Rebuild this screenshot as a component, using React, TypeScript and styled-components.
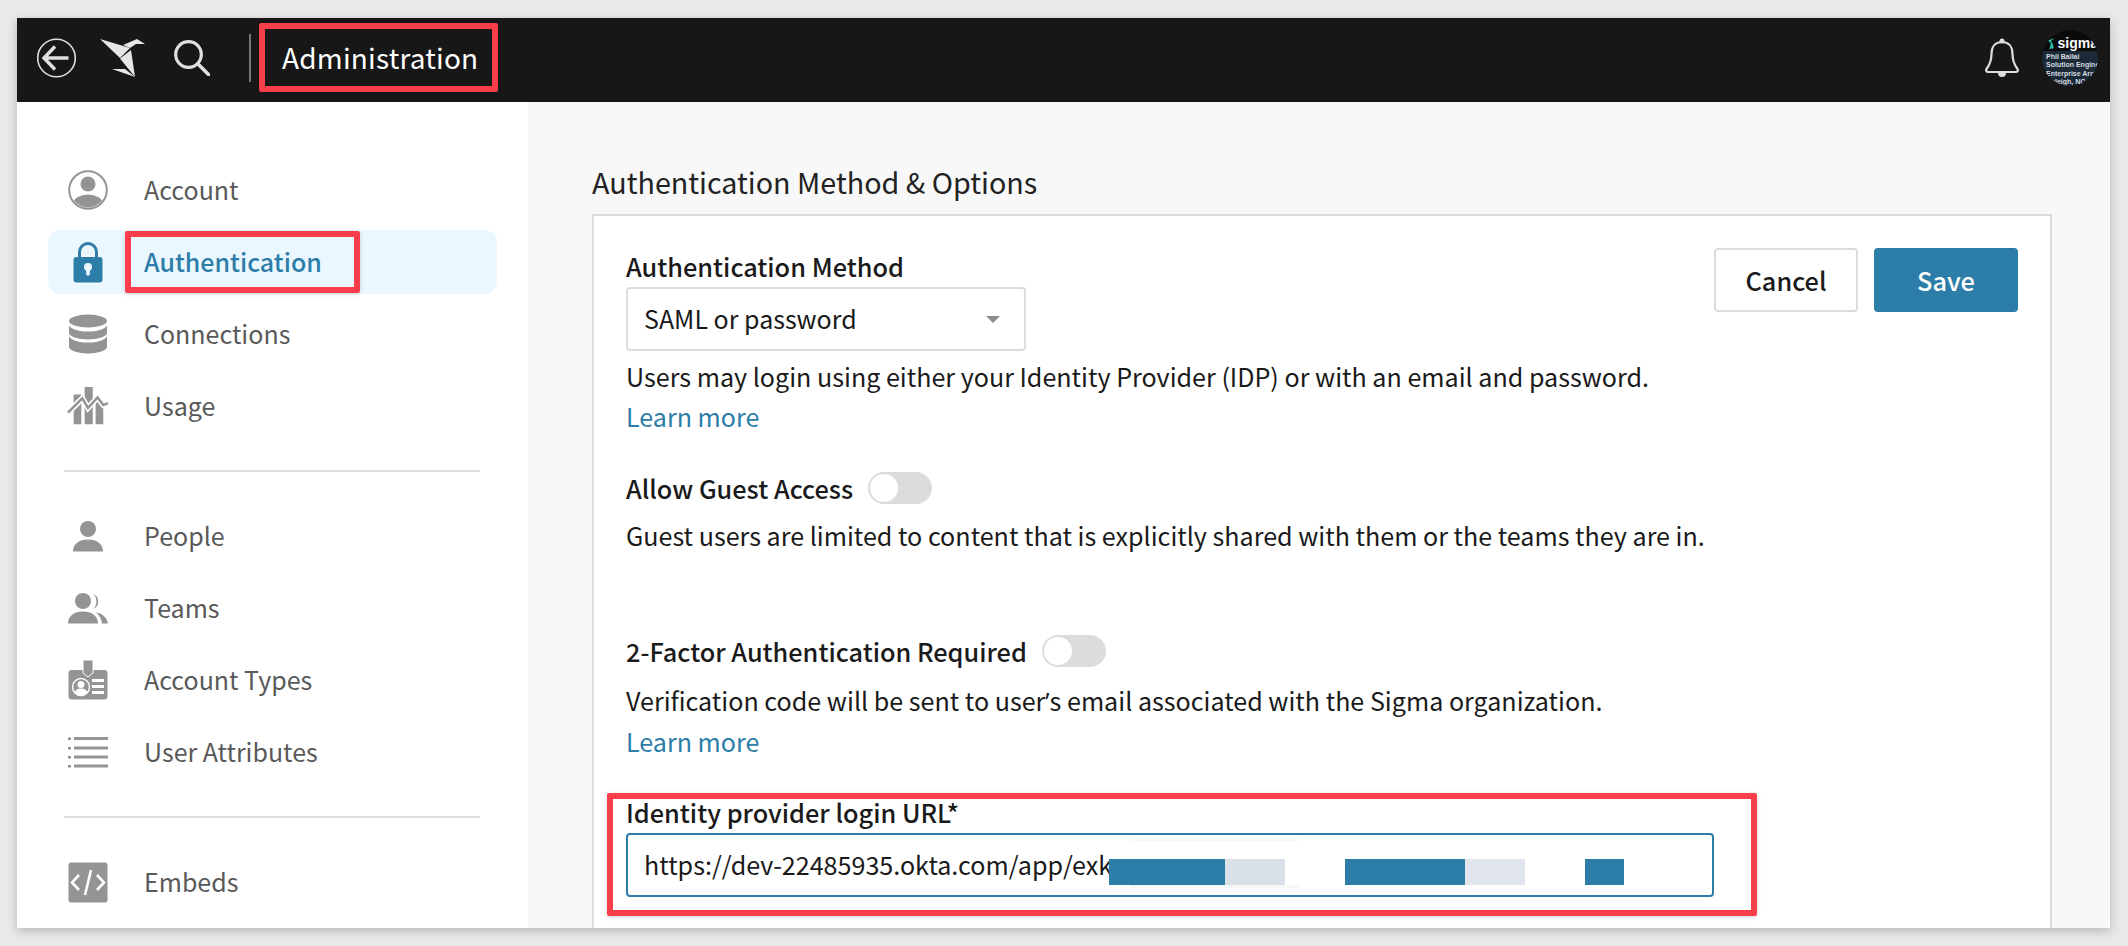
import React from "react";
import styled, { createGlobalStyle } from "styled-components";

const GlobalStyle = createGlobalStyle`
  html, body {
    margin: 0;
    padding: 0;
    background: #e9e9e9;
  }
  * {
    box-sizing: border-box;
  }
`;

const Page = styled.div`
  width: 2128px;
  height: 946px;
  padding: 18px 18px 18px 17px;
  background: #e9e9e9;
  overflow: hidden;
  font-family: "Noto Sans CJK SC", "Noto Sans", sans-serif;
`;

const Window = styled.div`
  height: 910px;
  display: flex;
  flex-direction: column;
  background: #f8f8f8;
  box-shadow: 0 3px 10px rgba(0, 0, 0, 0.22);
  overflow: hidden;
`;

const TopBar = styled.header`
  height: 84px;
  flex: none;
  display: flex;
  align-items: center;
  padding: 0 12px 4px 20px;
  background: #171717;
  color: #fff;
`;

const BarIcon = styled.svg<{ $gap: number }>`
  display: block;
  flex: none;
  margin-right: ${(p) => p.$gap}px;
`;

const BarDivider = styled.div`
  width: 2px;
  height: 48px;
  background: #777;
  flex: none;
`;

const TitleWrap = styled.div`
  position: relative;
  margin-left: 31px;
`;

const Title = styled.h1`
  margin: -1px 0 1px;
  font-size: 28px;
  font-weight: 400;
  line-height: 40px;
  letter-spacing: 0.2px;
`;

const Highlight = styled.div<{ $t: number; $l: number; $r: number; $b: number }>`
  position: absolute;
  top: ${(p) => p.$t}px;
  left: ${(p) => p.$l}px;
  right: ${(p) => p.$r}px;
  bottom: ${(p) => p.$b}px;
  border: 6px solid #f83e4b;
  border-radius: 2px;
  box-shadow: 0 1px 4px rgba(0, 0, 0, 0.18);
  pointer-events: none;
`;

const BarRight = styled.div`
  margin-left: auto;
  display: flex;
  align-items: center;
  gap: 23px;
`;

const Avatar = styled.div`
  width: 56px;
  height: 56px;
  border-radius: 50%;
  overflow: hidden;
  background: #0a0a0a;
`;

const AvatarBrand = styled.div`
  height: 21px;
  display: flex;
  align-items: flex-end;
  gap: 3px;
  padding-left: 6px;
  font-family: "Liberation Sans", sans-serif;
  font-size: 14px;
  font-weight: 700;
  line-height: 15px;
  color: #fff;
  white-space: nowrap;
`;

const AvatarCard = styled.div`
  height: 35px;
  padding: 2px 0 0 4px;
  background: #1c2a38;
  font-family: "Liberation Sans", sans-serif;
  font-size: 7px;
  font-weight: 700;
  line-height: 8.3px;
  color: #d5dbe0;
  white-space: nowrap;
`;

const Body = styled.div`
  flex: 1;
  min-height: 0;
  display: flex;
`;

const Sidebar = styled.nav`
  width: 511px;
  flex: none;
  padding: 56px 31px 0 31px;
  background: #fff;
`;

const NavRow = styled.div<{ $active?: boolean }>`
  position: relative;
  height: 64px;
  margin-bottom: 8px;
  display: flex;
  align-items: center;
  padding-left: 19px;
  border-radius: 12px;
  background: ${(p) => (p.$active ? "#ebf7fe" : "transparent")};
  color: ${(p) => (p.$active ? "#2d7da9" : "#595959")};
  font-size: 25px;
  font-weight: ${(p) => (p.$active ? 500 : 400)};
`;

const NavIcon = styled.span`
  width: 42px;
  height: 42px;
  flex: none;
  margin-right: 35px;
  display: flex;
  align-items: center;
  justify-content: center;
`;

const NavLabel = styled.span`
  line-height: 36px;
  margin-bottom: 3px;
`;

const NavDivider = styled.div`
  height: 2px;
  margin: 32px 17px 32px 16px;
  background: #dcdcdc;
`;

const Main = styled.main`
  flex: 1;
  min-width: 0;
  padding: 59px 58px 0 64px;
`;

const Heading = styled.h2`
  margin: 0 0 11px;
  font-size: 28.7px;
  font-weight: 400;
  line-height: 42px;
  color: #222;
`;

const Card = styled.section`
  position: relative;
  height: 760px;
  padding: 33px 32px 0 32px;
  background: #fff;
  border: 2px solid #dcdcdc;
`;

const Actions = styled.div`
  position: absolute;
  top: 32px;
  right: 32px;
  display: flex;
  gap: 16px;
`;

const Button = styled.button<{ $primary?: boolean }>`
  width: 144px;
  height: 64px;
  padding: 0;
  border-radius: 4px;
  border: 2px solid ${(p) => (p.$primary ? "#2d7da9" : "#dcdcdc")};
  background: ${(p) => (p.$primary ? "#2d7da9" : "#fff")};
  color: ${(p) => (p.$primary ? "#fff" : "#1a1a1a")};
  font-family: inherit;
  font-size: 25.3px;
  font-weight: 500;
`;

const Label = styled.div`
  font-size: 25.3px;
  font-weight: 500;
  line-height: 34px;
  color: #1a1a1a;
`;

const SwitchRow = styled.div<{ $top: number }>`
  margin-top: ${(p) => p.$top}px;
  display: flex;
  align-items: center;
  gap: 15px;
  height: 34px;
`;

const Switch = styled.span`
  position: relative;
  width: 64px;
  height: 32px;
  border-radius: 16px;
  background: #dcdcdc;
  flex: none;
`;

const Knob = styled.span`
  position: absolute;
  top: 2px;
  left: 2px;
  width: 28px;
  height: 28px;
  border-radius: 50%;
  background: #fff;
`;

const SelectBox = styled.div`
  width: 400px;
  height: 64px;
  margin-top: 4px;
  display: flex;
  align-items: center;
  justify-content: space-between;
  padding: 0 24px 2px 16px;
  border: 2px solid #dcdcdc;
  border-radius: 4px;
  font-size: 25px;
  color: #1a1a1a;
`;

const Caret = styled.span`
  width: 0;
  height: 0;
  margin-top: 2px;
  border-left: 7px solid transparent;
  border-right: 7px solid transparent;
  border-top: 7px solid #8c8c8c;
`;

const Help = styled.p<{ $top: number }>`
  margin: ${(p) => p.$top}px 0 0;
  font-size: 25.1px;
  line-height: 39px;
  color: #1a1a1a;
`;

// the cjk font draws a full width quote, so this one glyph comes from another family
const Apostrophe = styled.span`
  font-family: "Open Sans", sans-serif;
`;

const LearnMore = styled.a`
  display: block;
  margin-top: 1px;
  font-size: 25.1px;
  line-height: 39px;
  color: #2d7da9;
  text-decoration: none;
`;

const UrlField = styled.div`
  position: relative;
  margin-top: 34px;
`;

const UrlInput = styled.div`
  position: relative;
  width: 1088px;
  height: 64px;
  display: flex;
  align-items: center;
  margin-top: 4px;
  padding: 0 0 2px 16px;
  border: 2px solid #2d7da9;
  border-radius: 4px;
  font-size: 25.1px;
  color: #1a1a1a;
  white-space: nowrap;
  overflow: hidden;
`;

/* redacted bits of the url, painted over the input */
const Redaction = styled.span<{ $top?: number; $left: number; $width: number; $height?: number; $tone?: string }>`
  position: absolute;
  top: ${(p) => p.$top ?? 24}px;
  left: ${(p) => p.$left}px;
  width: ${(p) => p.$width}px;
  height: ${(p) => p.$height ?? 26}px;
  background: ${(p) => p.$tone ?? "#2d7da9"};
`;

function AccountIcon() {
  return (
    <svg width="40" height="40" viewBox="0 0 40 40">
      <defs>
        <clipPath id="acc">
          <circle cx="20" cy="20" r="17.5" />
        </clipPath>
      </defs>
      <circle cx="20" cy="20" r="18.8" fill="none" stroke="#949494" strokeWidth="2" />
      <circle cx="20" cy="14" r="7.5" fill="#949494" />
      <ellipse cx="20" cy="34" rx="15" ry="9.5" fill="#949494" clipPath="url(#acc)" />
    </svg>
  );
}

function LockIcon() {
  return (
    <svg width="30" height="41" viewBox="0 0 30 41">
      <path d="M6.5 17V10a8.5 8.5 0 0 1 17 0v7" fill="none" stroke="#2d7da9" strokeWidth="3" />
      <rect x="0.5" y="15" width="29" height="25.5" rx="3" fill="#2d7da9" />
      <circle cx="15" cy="25" r="4" fill="#ebf7fe" />
      <rect x="13.2" y="25.5" width="3.6" height="8" rx="1" fill="#ebf7fe" />
    </svg>
  );
}

function DatabaseIcon() {
  return (
    <svg width="40" height="40" viewBox="0 0 40 40">
      <ellipse cx="20" cy="7" rx="19" ry="6.5" fill="#949494" />
      <path d="M1 11.5C4 15.5 11 17.5 20 17.5S36 15.5 39 11.5V19C39 22.5 30 25.5 20 25.5S1 22.5 1 19z" fill="#949494" />
      <path d="M1 22.5C4 26.5 11 28.5 20 28.5S36 26.5 39 22.5V33C39 36.5 30 39.5 20 39.5S1 36.5 1 33z" fill="#949494" />
    </svg>
  );
}

function UsageIcon() {
  return (
    <svg width="44" height="40" viewBox="0 0 44 40">
      <path d="M7 8h8v31H7zM18.5 0H27v39h-8.5zM30 14h8v25h-8z" fill="#949494" />
      <path d="M1 27L16 12l6 10 10-11 6 8 5-2" fill="none" stroke="#fff" strokeWidth="6" />
      <path d="M1 27L16 12l6 10 10-11 6 8 5-2" fill="none" stroke="#949494" strokeWidth="2.6" />
    </svg>
  );
}

function PersonIcon() {
  return (
    <svg width="30" height="31" viewBox="0 0 30 31">
      <circle cx="15" cy="8" r="8" fill="#949494" />
      <path d="M0 30.5C0 23 6 18.5 15 18.5s15 4.5 15 12z" fill="#949494" />
    </svg>
  );
}

function TeamsIcon() {
  return (
    <svg width="40" height="31" viewBox="0 0 40 31">
      <path d="M25 1a8 8 0 0 1 0 15 10 10 0 0 0 0-15z" fill="#949494" />
      <circle cx="15" cy="8" r="8" fill="#949494" />
      <path d="M0 30.5C0 23 6 18.5 15 18.5s15 4.5 15 12z" fill="#949494" />
      <path d="M28 19.5c6.5 1 11 5 12 11h-6c-.5-4.5-2.5-8-6-11z" fill="#949494" />
    </svg>
  );
}

function BadgeIcon() {
  return (
    <svg width="40" height="40" viewBox="0 0 40 40">
      <rect x="0.5" y="10" width="39" height="29.5" rx="3" fill="#949494" />
      <path d="M15 0h10v13l-5 4-5-4z" fill="#949494" stroke="#fff" strokeWidth="1" />
      <circle cx="13" cy="27" r="8.5" fill="none" stroke="#fff" strokeWidth="1.4" />
      <circle cx="13" cy="24.5" r="3.5" fill="#fff" />
      <path d="M6.5 33c1-3.5 3.5-4.5 6.5-4.5s5.5 1 6.5 4.5a8.5 8.5 0 0 1-13 0z" fill="#fff" />
      <path d="M24 19h12v3H24zM24 25h12v3H24zM24 31h12v3H24z" fill="#fff" />
    </svg>
  );
}

function ListIcon() {
  return (
    <svg width="40" height="31" viewBox="0 0 40 31">
      <path d="M0 .5h3V3H0zM0 10h3v2.5H0zM0 19h3v2.5H0zM0 28h3v2.5H0zM6 0h34v3H6zM6 9.5h34v3H6zM6 18.5h34v3H6zM6 27.5h34v3H6z" fill="#949494" />
    </svg>
  );
}

function EmbedIcon() {
  return (
    <svg width="40" height="41" viewBox="0 0 40 41">
      <rect x="0.5" y="0.5" width="39" height="40" rx="2.5" fill="#949494" />
      <path d="M11 13l-7 7.5 7 7.5M29 13l7 7.5-7 7.5M23 8l-6 25" fill="none" stroke="#fff" strokeWidth="2.6" />
    </svg>
  );
}

const navTop = [
  { label: "Account", icon: <AccountIcon /> },
  { label: "Authentication", icon: <LockIcon />, active: true },
  { label: "Connections", icon: <DatabaseIcon /> },
  { label: "Usage", icon: <UsageIcon /> },
];

const navMiddle = [
  { label: "People", icon: <PersonIcon /> },
  { label: "Teams", icon: <TeamsIcon /> },
  { label: "Account Types", icon: <BadgeIcon /> },
  { label: "User Attributes", icon: <ListIcon /> },
];

const navBottom = [{ label: "Embeds", icon: <EmbedIcon /> }];

function NavItem({ label, icon, active }: { label: string; icon: React.ReactNode; active?: boolean }) {
  return (
    <NavRow $active={active}>
      <NavIcon>{icon}</NavIcon>
      <NavLabel>{label}</NavLabel>
      {active && <Highlight $t={1} $l={77} $r={137} $b={1} />}
    </NavRow>
  );
}

export default function App() {
  return (
    <Page>
      <GlobalStyle />
      <Window>
        <TopBar>
          <BarIcon $gap={23} width="40" height="40" viewBox="0 0 40 40">
            <circle cx="19.5" cy="20" r="18.8" fill="none" stroke="#e0e0e0" strokeWidth="1.6" />
            <path d="M18 8.5L7 20l11 11.5M8 20h23.5" fill="none" stroke="#e0e0e0" strokeWidth="3.4" />
          </BarIcon>
          <BarIcon $gap={29} width="45" height="39" viewBox="0 0 45 39">
            <path d="M0 0l30 9-10 10z" fill="#e6e6e6" />
            <path d="M23 6L37 0l8 5h-9l-6 4z" fill="#e6e6e6" />
            <path d="M20 19.5L31 11l4 27z" fill="#e6e6e6" />
            <path d="M12 30h13l10 8z" fill="#e6e6e6" />
          </BarIcon>
          <BarIcon $gap={39} width="36" height="36" viewBox="0 0 36 36">
            <circle cx="14.5" cy="14.5" r="12.8" fill="none" stroke="#e0e0e0" strokeWidth="3.2" />
            <path d="M24 24l10.5 10.5" fill="none" stroke="#e0e0e0" strokeWidth="3.6" strokeLinecap="round" />
          </BarIcon>
          <BarDivider />
          <TitleWrap>
            <Title>Administration</Title>
            <Highlight $t={-15} $l={-23} $r={-20} $b={-14} />
          </TitleWrap>
          <BarRight>
            <svg width="34" height="40" viewBox="0 0 34 40">
              <path
                d="M17 4c-7 0-10.5 5-10.5 12 0 7-2 11-5 15-1 1.5 0 3 1.5 3h28c1.5 0 2.5-1.5 1.5-3-3-4-5-8-5-15C27.5 9 24 4 17 4z"
                fill="none"
                stroke="#dedede"
                strokeWidth="2.2"
              />
              <circle cx="17" cy="3" r="2.5" fill="#dedede" />
              <path d="M13 35a4 4 0 0 0 8 0z" fill="#dedede" />
            </svg>
            <Avatar>
              <AvatarBrand>
                <svg width="9" height="15" viewBox="0 0 9 15">
                  <path d="M9 0L0 3.5l4 4L2 15l6-1-1.5-6L4 4.5z" fill="#2bbfa8" />
                </svg>
                sigma
              </AvatarBrand>
              <AvatarCard>
                Phil Ballai
                <br />
                Solution Engineer
                <br />
                Enterprise Arch
                <br />
                Raleigh, NC
              </AvatarCard>
            </Avatar>
          </BarRight>
        </TopBar>
        <Body>
          <Sidebar>
            {navTop.map((item) => (
              <NavItem key={item.label} {...item} />
            ))}
            <NavDivider />
            {navMiddle.map((item) => (
              <NavItem key={item.label} {...item} />
            ))}
            <NavDivider />
            {navBottom.map((item) => (
              <NavItem key={item.label} {...item} />
            ))}
          </Sidebar>
          <Main>
            <Heading>Authentication Method &amp; Options</Heading>
            <Card>
              <Actions>
                <Button>Cancel</Button>
                <Button $primary>Save</Button>
              </Actions>
              <Label>Authentication Method</Label>
              <SelectBox>
                SAML or password
                <Caret />
              </SelectBox>
              <Help $top={6}>Users may login using either your Identity Provider (IDP) or with an email and password.</Help>
              <LearnMore>Learn more</LearnMore>
              <SwitchRow $top={35}>
                <Label>Allow Guest Access</Label>
                <Switch>
                  <Knob />
                </Switch>
              </SwitchRow>
              <Help $top={11}>Guest users are limited to content that is explicitly shared with them or the teams they are in.</Help>
              <SwitchRow $top={79}>
                <Label>2-Factor Authentication Required</Label>
                <Switch>
                  <Knob />
                </Switch>
              </SwitchRow>
              <Help $top={13}>
                Verification code will be sent to user<Apostrophe>’</Apostrophe>s email associated with the Sigma organization.
              </Help>
              <LearnMore>Learn more</LearnMore>
              <UrlField>
                <Label>Identity provider login URL*</Label>
                <UrlInput>
                  https://dev-22485935.okta.com/app/exk
                  <Redaction $top={4} $left={502} $width={169} $height={2} $tone="#f8f8f8" />
                  <Redaction $top={50} $left={502} $width={169} $height={3} $tone="#f6f7f7" />
                  <Redaction $left={481} $width={116} />
                  <Redaction $left={597} $width={60} $tone="#d9e0e8" />
                  <Redaction $left={717} $width={120} />
                  <Redaction $left={837} $width={60} $tone="#e1e6ee" />
                  <Redaction $left={957} $width={39} />
                </UrlInput>
                <Highlight $t={-2} $l={-19} $r={261} $b={-19} />
              </UrlField>
            </Card>
          </Main>
        </Body>
      </Window>
    </Page>
  );
}
